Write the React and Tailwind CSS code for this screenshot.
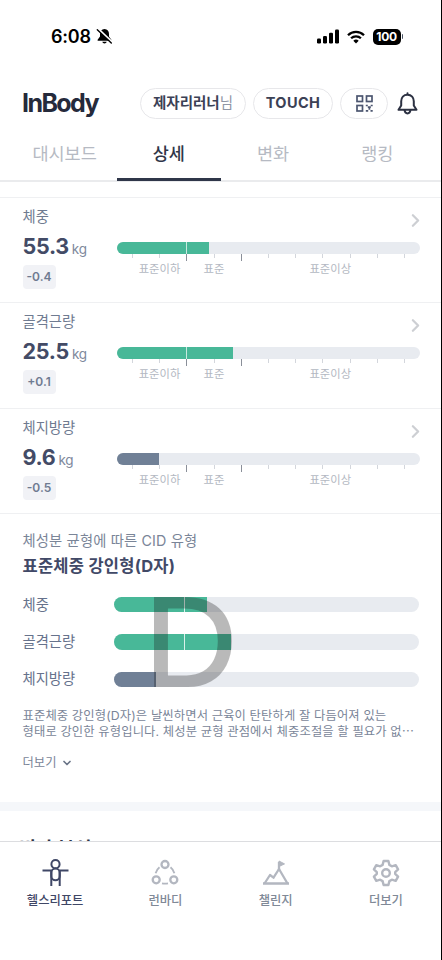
import React from 'react';
import { ChevronDown, ChevronRight } from 'lucide-react';

const measurements = [
  { label: '체중', value: '55.3', diff: '-0.4', fill: 92, good: true },
  { label: '골격근량', value: '25.5', diff: '+0.1', fill: 116, good: true },
  { label: '체지방량', value: '9.6', diff: '-0.5', fill: 42, good: false },
];

const cidBars = [
  { label: '체중', fill: 93, good: true },
  { label: '골격근량', fill: 117, good: true },
  { label: '체지방량', fill: 42, good: false },
];

const tabs = ['대시보드', '상세', '변화', '랭킹'];

// the 3rd and 5th ticks mark the borders of the standard range
const ticks = Array.from({ length: 11 }, (_, i) => ({
  x: 15 + i * 27.2,
  major: i === 2 || i === 4,
}));

const StatusBar = () => (
  <div className="flex h-[72px] items-center justify-between pl-[51px] pr-[38px] pt-px text-black">
    <div className="flex items-center gap-1">
      <span className="w-[41px] text-[18px] font-semibold leading-none tracking-[-0.2px]">6:08</span>
      <svg width="17" height="17" viewBox="0 0 17 17">
        <path d="M8.5 1C5.6 1 4 3.2 4 6v2.4L1.8 11.4c-.5.7-.2 1.4.6 1.4h12.2c.8 0 1.1-.7.6-1.4L13 8.4V6c0-2.8-1.6-5-4.5-5ZM6.3 13.8h4.4c-.3 1-1.1 1.7-2.2 1.7s-1.9-.7-2.2-1.7Z" fill="currentColor" />
        <path d="M2.6 1.2 16.6 14.5" stroke="white" strokeWidth="2" />
        <path d="M1.3 1.8 15.3 15.1" stroke="currentColor" strokeWidth="1.4" strokeLinecap="round" />
      </svg>
    </div>
    <div className="flex items-center gap-2">
      <svg width="22" height="15" viewBox="0 0 22 15" fill="currentColor">
        <rect x="0" y="9.5" width="4" height="5" rx="1.2" />
        <rect x="6" y="7" width="4" height="7.5" rx="1.2" />
        <rect x="12" y="3.8" width="4" height="10.7" rx="1.2" />
        <rect x="18" y="0.5" width="4" height="14" rx="1.2" />
      </svg>
      <svg width="18" height="14" viewBox="0 0 18 14" fill="none" stroke="currentColor" strokeWidth="2.3">
        <path d="M1 5.2a11.4 11.4 0 0 1 16 0" />
        <path d="M4.1 8.3a7 7 0 0 1 9.8 0" />
        <path d="M9 13.6 6.3 10.8a3.9 3.9 0 0 1 5.4 0Z" fill="currentColor" stroke="none" />
      </svg>
      <div className="flex items-center gap-px">
        <span className="flex h-4 w-7 items-center justify-center rounded-[5px] bg-black text-[12px] font-bold leading-none tracking-[-0.3px] text-white">100</span>
        <span className="h-[5px] w-[1.5px] rounded-r-full bg-gray-600" />
      </div>
    </div>
  </div>
);

const QrIcon = () => (
  <svg width="17" height="17" viewBox="0 0 17 17" fill="none" stroke="#4c5670" strokeWidth="1.7">
    <rect x="1" y="1" width="5.5" height="5.5" />
    <rect x="10.5" y="1" width="5.5" height="5.5" />
    <rect x="1" y="10.5" width="5.5" height="5.5" />
    <path d="M9.8 10.5h2M14.7 10.5h2M11.8 12.2h3M12.5 13.8h1.8M9.8 15.8h2.4M14.5 15.8h2.2" />
  </svg>
);

const Header = () => (
  <div className="flex h-[63px] items-center px-[22px]">
    <span className="w-[118px] pb-px text-[25px] font-bold leading-none tracking-[-1.6px] text-[#252a3b]">InBody</span>
    <div className="flex items-center gap-[7px]">
      <div className="flex h-[31px] w-[106px] items-center justify-center rounded-full border-[1.5px] border-[#e7e7ea] text-[14.5px] leading-none text-[#8f96a5]">
        <span className="font-bold text-[#3b4155]">제자리러너</span>님
      </div>
      <div className="flex h-[31px] w-20 items-center justify-center rounded-full border-[1.5px] border-[#e7e7ea] text-[14.5px] font-bold leading-none tracking-[0.4px] text-[#3b4155]">
        TOUCH
      </div>
      <div className="flex h-[31px] w-12 items-center justify-center rounded-full border-[1.5px] border-[#e7e7ea]">
        <QrIcon />
      </div>
    </div>
    <svg className="ml-[9px] shrink-0" width="21" height="23" viewBox="0 0 21 23" fill="none" stroke="#2c3142" strokeWidth="2" strokeLinejoin="round" strokeLinecap="round">
      <path d="M10.5 1.2v1.5M10.5 2.7c-4 0-6.3 2.8-6.3 6.6v4.2L1.5 17.8h18l-2.7-4.3V9.3c0-3.8-2.3-6.6-6.3-6.6Z" />
      <path d="M7.6 18.2c.2 2 1.3 3.2 2.9 3.2s2.7-1.2 2.9-3.2" />
    </svg>
  </div>
);

const Tabs = () => (
  <div className="flex h-[47px] border-b-2 border-[#eaebed] pl-[12.5px] pr-[11.5px]">
    {tabs.map((tab) => (
      <div
        key={tab}
        className={`-mb-px flex flex-1 justify-center border-b-[3px] pt-[6px] text-[17.5px] leading-[26px] ${
          tab === '상세' ? 'border-[#2f3649] font-medium text-[#2f3649]' : 'border-transparent text-[#b6bac3]'
        }`}
      >
        {tab}
      </div>
    ))}
  </div>
);

const MeasurementRow = ({ label, value, diff, fill, good }) => (
  <div className="flex h-[105.4px] border-t border-[#eff0f2] pl-[22.5px] pr-[21.5px]">
    <div className="w-[94.5px]">
      <p className="pt-[9px] text-[14.3px] leading-5 text-[#6f7b91]">{label}</p>
      <p className="mt-[7px] flex h-6 items-baseline gap-[3px] leading-6">
        <span className="text-[21.5px] font-bold tracking-[-0.3px] text-[#434b66]">{value}</span>
        <span className="text-[13.5px] tracking-[-0.3px] text-[#7e899c]">kg</span>
      </p>
      <span className="mt-[7px] flex h-6 w-[33px] items-center justify-center rounded bg-[#f1f2f6] text-[12px] font-semibold text-[#6f7b91]">
        {diff}
      </span>
    </div>
    <div className="flex-1">
      <div className="flex h-[44px] justify-end pt-[12px]">
        <ChevronRight className="-mr-[6px] h-[21px] w-[21px] text-[#cdcfd3]" strokeWidth={2.6} />
      </div>
      <div className="relative h-3 overflow-hidden rounded-full bg-[#e8ebf0]">
        <div className={`h-full ${good ? 'bg-[#48b898]' : 'bg-[#708096]'}`} style={{ width: fill }} />
        {good && <span className="absolute left-[69px] top-0 h-full w-px bg-white/70" />}
      </div>
      <div className="relative h-2">
        {ticks.map((tick) => (
          <span
            key={tick.x}
            className={`absolute top-0 w-px ${tick.major ? 'h-[7px] bg-[#8a8f99]' : 'h-1 bg-[#d3d6dc]'}`}
            style={{ left: tick.x }}
          />
        ))}
      </div>
      <div className="flex pt-px text-center text-[11.3px] leading-3 text-[#b3b8c2]">
        <span className="w-[70px] whitespace-nowrap pl-[15px]">표준이하</span>
        <span className="w-[54px]">표준</span>
        <span className="flex-1">표준이상</span>
      </div>
    </div>
  </div>
);

const CidSection = () => (
  <div className="h-[289px] border-t border-[#eff0f2] pl-[22.5px] pr-[22px] pt-4">
    <p className="text-[14.3px] leading-[22px] tracking-[0.15px] text-[#7a8598]">체성분 균형에 따른 CID 유형</p>
    <h2 className="mt-px text-[16.5px] font-bold leading-[26px] tracking-[0.25px] text-[#414967]">표준체중 강인형(D자)</h2>
    <div className="relative mt-[18px] flex flex-col gap-[22px]">
      {cidBars.map((bar) => (
        <div key={bar.label} className="flex h-[15.3px] items-center">
          <span className="w-[91.5px] text-[14.3px] leading-none text-[#66728c]">{bar.label}</span>
          <div className="relative h-full flex-1 overflow-hidden rounded-full bg-[#e8ebf0]">
            <div className={`h-full ${bar.good ? 'bg-[#48b898]' : 'bg-[#708096]'}`} style={{ width: bar.fill }} />
            {bar.good && <span className="absolute left-[70px] top-0 h-full w-px bg-white/80" />}
          </div>
        </div>
      ))}
      <span className="absolute left-[122px] top-[-27px] font-['Liberation_Sans'] text-[128px] leading-[144px] text-[#1c1c1c] opacity-30 [-webkit-text-stroke:2px_#1c1c1c]">
        D
      </span>
    </div>
    <p className="mt-[21px] whitespace-nowrap text-[12.3px] leading-[15.5px] tracking-[0.13px] text-[#7a8598]">
      표준체중 강인형(D자)은 날씬하면서 근육이 탄탄하게 잘 다듬어져 있는
      <br />
      형태로 강인한 유형입니다. 체성분 균형 관점에서 체중조절을 할 필요가 없⋯
    </p>
    <div className="mt-[14px] flex items-center gap-[5px] text-[12.3px] leading-5 text-[#7a8598]">
      더보기
      <ChevronDown className="h-3 w-3 text-[#6b7588]" strokeWidth={3.4} />
    </div>
  </div>
);

const BodyIcon = () => (
  <svg width="28" height="28" viewBox="0 0 28 28" fill="none" stroke="#3f4766" strokeWidth="2">
    <circle cx="14.5" cy="5.2" r="4.1" />
    <path d="M1.5 11.6h9M18.5 11.6h9M10.3 27V11.6M18.7 27V11.6" />
    <rect x="10.3" y="9.6" width="8.4" height="11.6" rx="4.2" />
  </svg>
);

const RunbodyIcon = () => (
  <svg width="28" height="28" viewBox="0 0 28 28" fill="none" stroke="#b3b7c0" strokeWidth="2.3">
    <circle cx="14" cy="5.5" r="3.5" />
    <circle cx="5.2" cy="20.8" r="3.5" />
    <circle cx="22.8" cy="20.8" r="3.5" />
    <path d="M8.5 8.2a11 11 0 0 0-3.9 6M19.5 8.2a11 11 0 0 1 3.9 6M11 24.3q3 .8 6 0" strokeWidth="1.8" />
  </svg>
);

const ChallengeIcon = () => (
  <svg width="28" height="28" viewBox="0 0 28 28" fill="none" stroke="#b3b7c0" strokeWidth="2.3" strokeLinejoin="round">
    <path d="M2.5 24.5 8 16l3.5 2.7L17 10l8.5 14.5" />
    <path d="M1 24.5h26M17 11V3" />
    <path d="M17 2v5.5l5.5-2.6Z" fill="#b3b7c0" strokeWidth="1" />
  </svg>
);

const GearIcon = () => (
  <svg width="28" height="28" viewBox="0 0 28 28" fill="none" stroke="#b3b7c0" strokeWidth="2.4" strokeLinejoin="round">
    <circle cx="14" cy="14" r="3.8" />
    <path d="M11.6 2h4.8l1 3.9 2.4 1.4 3.9-1.1 2.4 4.2-2.9 2.8v1.6l2.9 2.8-2.4 4.2-3.9-1.1-2.4 1.4-1 3.9h-4.8l-1-3.9-2.4-1.4-3.9 1.1-2.4-4.2 2.9-2.8v-1.6l-2.9-2.8 2.4-4.2 3.9 1.1 2.4-1.4Z" />
  </svg>
);

const navItems = [
  { label: '헬스리포트', icon: BodyIcon, active: true },
  { label: '런바디', icon: RunbodyIcon },
  { label: '챌린지', icon: ChallengeIcon },
  { label: '더보기', icon: GearIcon },
];

const BottomNav = () => (
  <nav className="flex h-[119px] border-t border-[#dcdde0] bg-white pt-[17px]">
    {navItems.map(({ label, icon: Icon, active }) => (
      <div
        key={label}
        className={`flex flex-1 flex-col items-center gap-1 text-[12.3px] font-medium leading-5 ${
          active ? 'text-[#3f4766]' : 'text-[#808997]'
        }`}
      >
        <Icon />
        {label}
      </div>
    ))}
  </nav>
);

const App = () => (
  <div className="flex h-[960px] w-[442px] flex-col overflow-hidden border-r border-black bg-white font-['Inter','Noto_Sans_CJK_KR',sans-serif]">
    <StatusBar />
    <Header />
    <Tabs />
    <main className="h-[659px] shrink-0 overflow-hidden pt-[15px]">
      {measurements.map((item) => (
        <MeasurementRow key={item.label} {...item} />
      ))}
      <CidSection />
      <div className="h-[9px] bg-[#f5f7fa]" />
      <h2 className="pl-[19px] pt-[24px] text-[18.5px] font-bold leading-[26px] text-[#2f3649]">비만 분석</h2>
    </main>
    <BottomNav />
  </div>
);

export default App;
